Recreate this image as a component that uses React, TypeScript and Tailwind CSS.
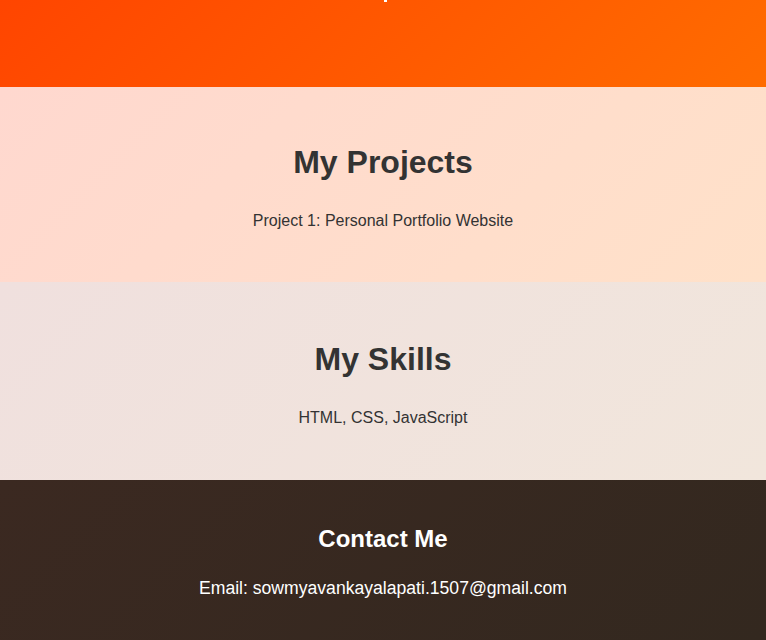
import React from "react";

const App: React.FC = () => {
  return (
    <div className="w-full min-h-[640px] font-['Liberation_Sans',Arial,sans-serif] text-[#333]">
      {/* Header (scrolled, only the bottom shows) */}
      <header className="h-[87px] bg-[linear-gradient(135deg,#ff4500,#ff6c00)] flex flex-col items-center">
        <span className="w-[3px] h-[2px] bg-white ml-[4px]" />
      </header>

      {/* Projects */}
      <section className="h-[195px] bg-[linear-gradient(135deg,#ffd8cf,#ffe1c9)] text-center pt-[57px]">
        <h2 className="text-[32px] leading-[37px] font-bold">My Projects</h2>
        <p className="mt-[31px] text-[16px] leading-[18px]">Project 1: Personal Portfolio Website</p>
      </section>

      {/* Skills */}
      <section className="h-[198px] bg-[linear-gradient(135deg,#f0e0de,#f1e6dc)] text-center pt-[59px]">
        <h2 className="text-[32px] leading-[37px] font-bold">My Skills</h2>
        <p className="mt-[31px] text-[16px] leading-[18px]">HTML, CSS, JavaScript</p>
      </section>

      {/* Contact */}
      <footer className="h-[160px] bg-[linear-gradient(135deg,#3b2921,#33281f)] text-white text-center pt-[45px]">
        <h3 className="text-[24px] leading-[28px] font-bold">Contact Me</h3>
        <p className="mt-[25px] text-[17.6px] leading-[21px]">Email: sowmyavankayalapati.1507@gmail.com</p>
      </footer>
    </div>
  );
};

export default App;
